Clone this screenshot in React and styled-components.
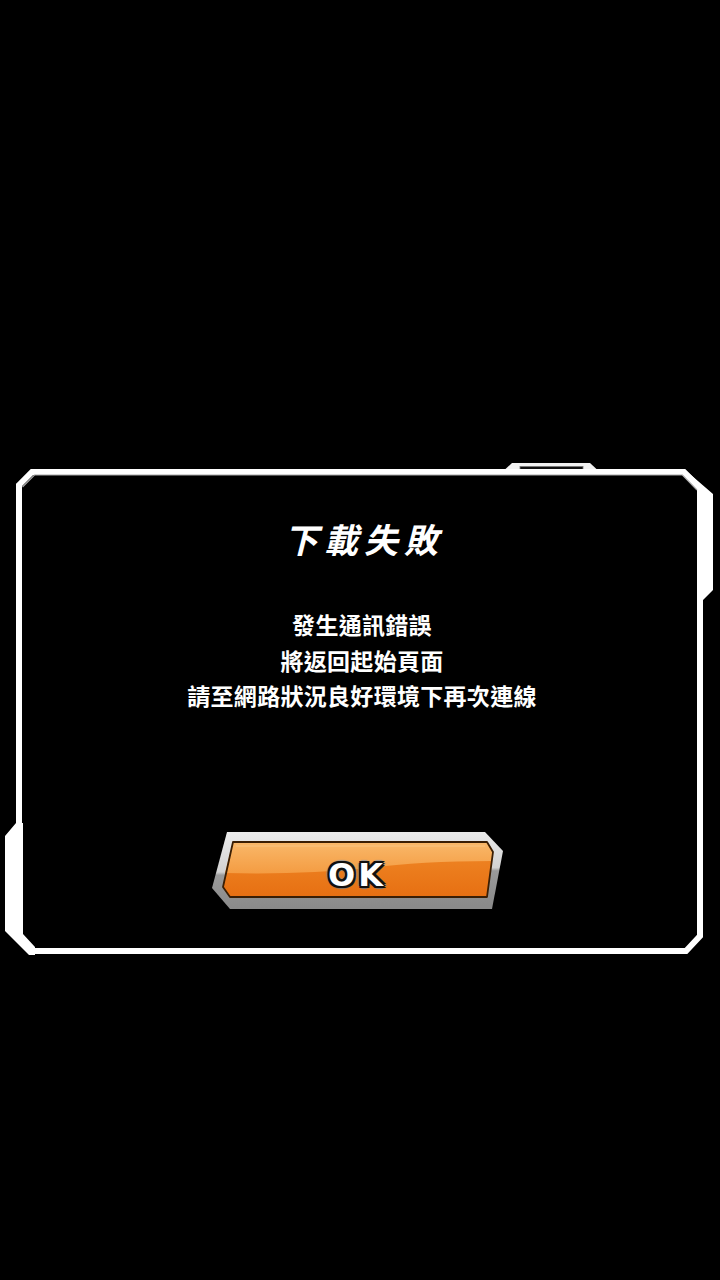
import React from 'react';
import styled, { createGlobalStyle } from 'styled-components';

const GlobalStyle = createGlobalStyle`
	html, body {
		margin: 0;
		padding: 0;
		background: #000;
	}
	#root {
		min-height: 1280px;
	}
`;

const Screen = styled.div`
	width: 720px;
	height: 1280px;
	background: #000;
	display: flex;
	flex-direction: column;
	align-items: flex-start;
	padding-top: 463px;
	box-sizing: border-box;
	font-family: "Noto Sans CJK TC", "Noto Sans CJK SC", "Noto Sans", sans-serif;
`;

const Dialog = styled.div`
	position: relative;
	width: 710px;
	height: 494px;
	margin-left: 5px;
	display: flex;
	flex-direction: column;
	align-items: center;
	padding-top: 56px;
	box-sizing: border-box;
`;

const FrameArt = styled.svg`
	position: absolute;
	left: 0;
	top: 0;
	pointer-events: none;
`;

const Title = styled.h1`
	margin: 0 0 0 8px;
	color: #fff;
	font-size: 34px;
	line-height: 40px;
	font-weight: 700;
	font-style: italic;
	letter-spacing: 6px;
`;

const Message = styled.div`
	margin-top: 48px;
	margin-left: 4px;
	color: #fff;
	font-size: 23px;
	line-height: 35.5px;
	font-weight: 700;
	text-align: center;
	letter-spacing: 0.3px;
`;

const OkButton = styled.button`
	position: relative;
	margin-top: 117px;
	margin-right: 6px;
	width: 294px;
	height: 79px;
	padding: 9px 0 0;
	border: 0;
	background: transparent;
	display: flex;
	align-items: center;
	justify-content: center;
	cursor: pointer;
`;

const ButtonArt = styled.svg`
	position: absolute;
	left: 0;
	top: 0;
`;

const ButtonLabel = styled.span`
	position: relative;
	font-family: "DejaVu Sans", "Liberation Sans", sans-serif;
	font-weight: 700;
	font-size: 32px;
	letter-spacing: 3px;
	color: #fff;
	text-shadow:
		2px 0 0 #111, -2px 0 0 #111, 0 2px 0 #111, 0 -2px 0 #111,
		2px 2px 0 #111, -2px 2px 0 #111, 2px -2px 0 #111, -2px -2px 0 #111,
		0 3px 1px #777, 3px 0 1px #888, -3px 0 1px #888, 0 -3px 1px #999;
`;

const Frame = () => (
	<FrameArt width="710" height="494" viewBox="5 463 710 494">
		{/* top tab */}
		<polygon points="505,469.5 512,463 590,463 597,469.5" fill="#f2f2f2" />
		<rect x="520" y="466.5" width="63" height="4" fill="#111" stroke="#777" strokeWidth="0.8" />
		{/* main bracket line */}
		<path
			d="M19 485 L32 472 L684 472 L700 488 L700 936 L686 951 L34 951 L19 936 Z"
			fill="none"
			stroke="#fff"
			strokeWidth="6"
			strokeLinejoin="miter"
		/>
		{/* thick right shoulder */}
		<polygon points="684,469 713,494 713,590 703,600 697,600 697,490 682,475" fill="#fff" />
		{/* thick left foot */}
		<polygon points="16,823 23,823 23,934 35,947 35,955 29,955 5,931 5,836" fill="#fff" />
		{/* soft inner edge */}
		<path
			d="M22.5 487 L34.5 475 L682.5 475 L697 490"
			fill="none"
			stroke="#a8a8a8"
			strokeWidth="1.2"
		/>
	</FrameArt>
);

const ButtonShape = () => (
	<ButtonArt width="294" height="79" viewBox="210 832 294 79">
		<defs>
			<linearGradient id="silver" x1="0" y1="0" x2="0.06" y2="1">
				<stop offset="0" stopColor="#ededed" />
				<stop offset="0.52" stopColor="#d2d2d2" />
				<stop offset="0.56" stopColor="#9a9a9a" />
				<stop offset="1" stopColor="#8a8a8a" />
			</linearGradient>
			<linearGradient id="orangeBase" x1="0" y1="0" x2="0" y2="1">
				<stop offset="0" stopColor="#f08a28" />
				<stop offset="1" stopColor="#e76f12" />
			</linearGradient>
			<linearGradient id="orangeGloss" x1="0" y1="0" x2="0" y2="1">
				<stop offset="0" stopColor="#f9b86a" />
				<stop offset="1" stopColor="#f49c42" />
			</linearGradient>
		</defs>
		<polygon points="227,833 485,833 503,852 492,910 230,910 212,889" fill="url(#silver)" />
		<polygon points="233,843 487,843 493,853 487,898 230,898 223,888" fill="url(#orangeBase)" />
		<path
			d="M233 843 L487 843 L493 853 L491.5 862 Q420 862 370 869 Q300 876 225 874 Z"
			fill="url(#orangeGloss)"
		/>
		<path d="M236 847 L485 847" stroke="#fbc98a" strokeWidth="1.2" opacity="0.8" />
		<polygon
			points="233,843 487,843 493,853 487,898 230,898 223,888"
			fill="none"
			stroke="#3a1e04"
			strokeWidth="1.8"
			strokeLinejoin="round"
		/>
	</ButtonArt>
);

export default function App () {
	return (
		<Screen>
			<GlobalStyle />
			<Dialog>
				<Frame />
				<Title>下載失敗</Title>
				<Message>
					發生通訊錯誤<br />
					將返回起始頁面<br />
					請至網路狀況良好環境下再次連線
				</Message>
				<OkButton type="button">
					<ButtonShape />
					<ButtonLabel>OK</ButtonLabel>
				</OkButton>
			</Dialog>
		</Screen>
	);
}
